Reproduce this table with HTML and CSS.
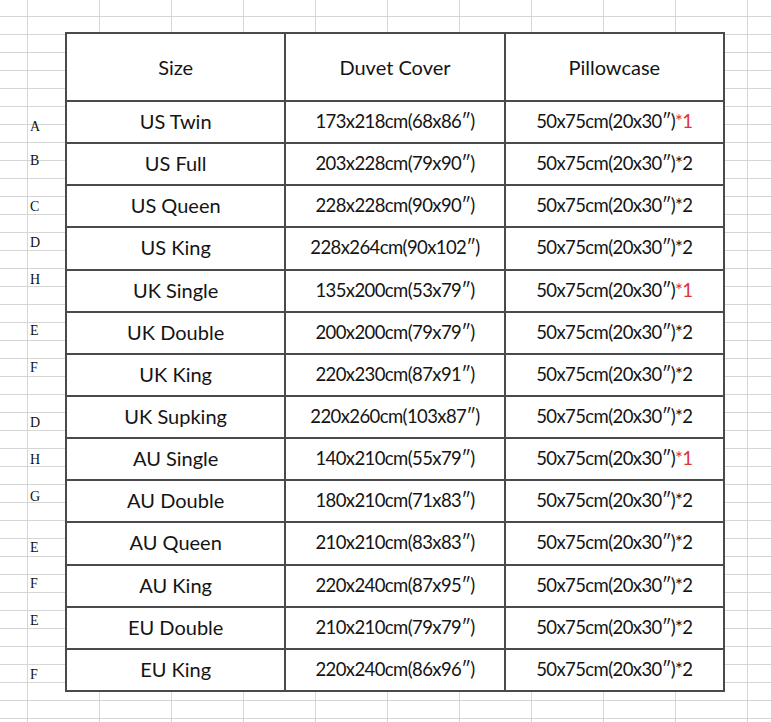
FILE: index.html
```html
<!DOCTYPE html>
<html>
<head>
<meta charset="utf-8">
<link rel="stylesheet" href="styles.css">
</head>
<body>
<div class="sheet">
  <div class="labels">
    <span class="lbl">A</span><span class="lbl">B</span><span class="lbl">C</span><span class="lbl">D</span>
    <span class="lbl">H</span><span class="lbl">E</span><span class="lbl">F</span><span class="lbl">D</span>
    <span class="lbl">H</span><span class="lbl">G</span><span class="lbl">E</span><span class="lbl">F</span>
    <span class="lbl">E</span><span class="lbl">F</span>
  </div>
  <table class="sizes">
    <thead>
      <tr><th>Size</th><th>Duvet Cover</th><th>Pillowcase</th></tr>
    </thead>
    <tbody>
      <tr><td>US Twin</td><td class="num">173x218cm(68x86″)</td><td class="num">50x75cm(20x30″)<span class="red">*1</span></td></tr>
      <tr><td>US Full</td><td class="num">203x228cm(79x90″)</td><td class="num">50x75cm(20x30″)*2</td></tr>
      <tr><td>US Queen</td><td class="num">228x228cm(90x90″)</td><td class="num">50x75cm(20x30″)*2</td></tr>
      <tr><td>US King</td><td class="num">228x264cm(90x102″)</td><td class="num">50x75cm(20x30″)*2</td></tr>
      <tr><td>UK Single</td><td class="num">135x200cm(53x79″)</td><td class="num">50x75cm(20x30″)<span class="red">*1</span></td></tr>
      <tr><td>UK Double</td><td class="num">200x200cm(79x79″)</td><td class="num">50x75cm(20x30″)*2</td></tr>
      <tr><td>UK King</td><td class="num">220x230cm(87x91″)</td><td class="num">50x75cm(20x30″)*2</td></tr>
      <tr><td>UK Supking</td><td class="num">220x260cm(103x87″)</td><td class="num">50x75cm(20x30″)*2</td></tr>
      <tr><td>AU Single</td><td class="num">140x210cm(55x79″)</td><td class="num">50x75cm(20x30″)<span class="red">*1</span></td></tr>
      <tr><td>AU Double</td><td class="num">180x210cm(71x83″)</td><td class="num">50x75cm(20x30″)*2</td></tr>
      <tr><td>AU Queen</td><td class="num">210x210cm(83x83″)</td><td class="num">50x75cm(20x30″)*2</td></tr>
      <tr><td>AU King</td><td class="num">220x240cm(87x95″)</td><td class="num">50x75cm(20x30″)*2</td></tr>
      <tr><td>EU Double</td><td class="num">210x210cm(79x79″)</td><td class="num">50x75cm(20x30″)*2</td></tr>
      <tr><td>EU King</td><td class="num">220x240cm(86x96″)</td><td class="num">50x75cm(20x30″)*2</td></tr>
    </tbody>
  </table>
</div>
</body>
</html>
```
FILE: styles.css
```css
html, body {
  margin: 0;
  padding: 0;
}
body {
  width: 771px;
  height: 722px;
  overflow: hidden;
  background-color: #ffffff;
  background-image:
    linear-gradient(to right, #d6d6d6 1px, transparent 1px),
    linear-gradient(to bottom, #d6d6d6 1px, transparent 1px);
  background-size: 72px 100%, 100% 18px;
  background-position: 27px 0, 0 16px;
}
.sheet {
  display: flex;
  align-items: flex-start;
}
.labels {
  width: 34px;
  padding-left: 30px;
  display: flex;
  flex-direction: column;
  align-items: flex-start;
  font-family: "Liberation Serif", "DejaVu Serif", serif;
  font-size: 14px;
  line-height: 12px;
  color: #111;
}
.lbl:nth-child(1) { margin-top: 121px; }
.lbl:nth-child(2) { margin-top: 22px; }
.lbl:nth-child(3) { margin-top: 34px; }
.lbl:nth-child(4) { margin-top: 24px; }
.lbl:nth-child(5) { margin-top: 25px; }
.lbl:nth-child(6) { margin-top: 39px; }
.lbl:nth-child(7) { margin-top: 25px; }
.lbl:nth-child(8) { margin-top: 43px; }
.lbl:nth-child(9) { margin-top: 25px; }
.lbl:nth-child(10) { margin-top: 25px; }
.lbl:nth-child(11) { margin-top: 39px; }
.lbl:nth-child(12) { margin-top: 24px; }
.lbl:nth-child(13) { margin-top: 25px; }
.lbl:nth-child(14) { margin-top: 42px; }

.sizes {
  margin-top: 32px;
  margin-left: 1px;
  border-collapse: collapse;
  background: #ffffff;
  font-family: Lato, "Open Sans", sans-serif;
  font-size: 20px;
  color: #141414;
  table-layout: fixed;
  width: 660px;
}
.sizes th, .sizes td {
  border: 2px solid #4a4a4a;
  text-align: center;
  padding: 0;
  font-weight: normal;
}
.sizes thead tr {
  height: 68px;
}
.sizes tbody tr {
  height: 42.15px;
}
.sizes td {
  padding-bottom: 2px;
}
.sizes td.num {
  font-size: 18.5px;
  letter-spacing: -0.6px;
}
.red {
  color: #e1323c;
}
```
